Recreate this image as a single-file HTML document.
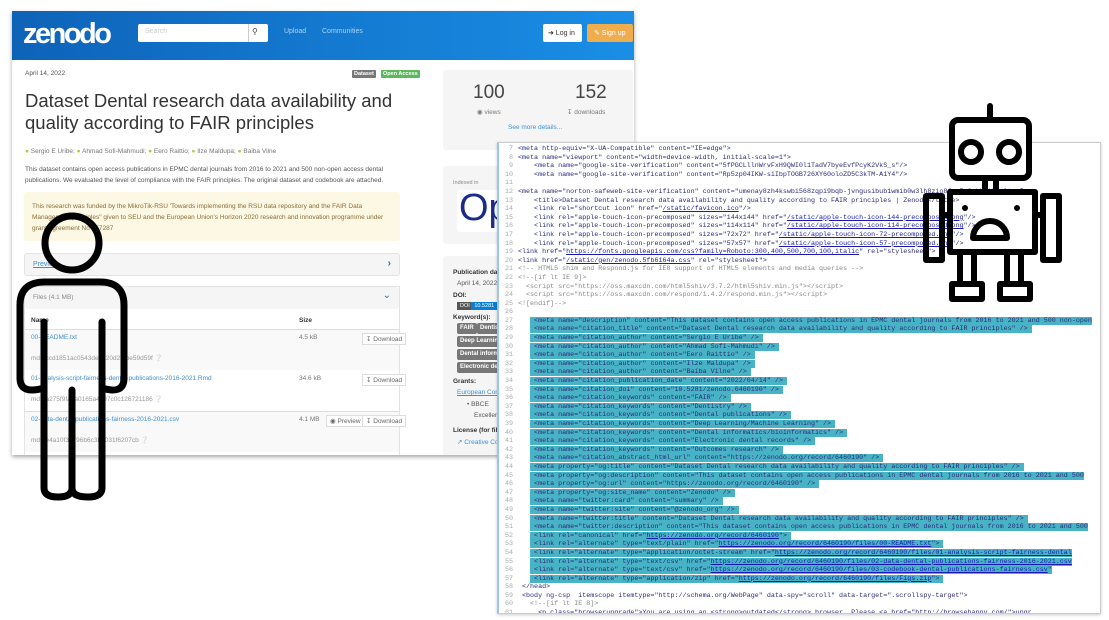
<!DOCTYPE html>
<html><head><meta charset="utf-8">
<style>
*{margin:0;padding:0;box-sizing:border-box}
body{width:1109px;height:620px;background:#fff;position:relative;overflow:hidden;font-family:"Liberation Sans",sans-serif;color:#333}
.a{position:absolute;white-space:nowrap}
#page{left:12px;top:11px;width:622px;height:444px;background:#fff;box-shadow:0 2px 4px rgba(0,0,0,.35);overflow:hidden}
#hdr{left:0;top:0;width:622px;height:49px;background:linear-gradient(90deg,#0d63b8,#1a8ee6)}
.sm{font-size:6.5px;color:#555}
.gbox{background:#f5f5f5;border-radius:3px}
.lnk{color:#3d8fd6}
.kw{position:absolute;background:#777;color:#fff;font-size:6px;line-height:7px;font-weight:bold;padding:2px 3px;border-radius:2px;white-space:nowrap}
#code{left:497px;top:142px;width:604px;height:472px;background:#fff;border:1px solid #ccc;border-left:2px solid #9ec6e8;box-shadow:0 1px 3px rgba(0,0,0,.2);overflow:hidden;font-family:"Liberation Mono",monospace;font-size:6.7px;line-height:8.6px;color:#2b2b7a}
#nums{left:0;top:2px;width:14px;text-align:right;color:#aaa;white-space:pre}
#src{left:19px;top:2px;white-space:pre}
.h{background:#49b3c6}
.u{text-decoration:underline;color:#1a1ab0}
.c{color:#888}
.wrap{white-space:normal}
</style></head><body>
<div id="page" class="a">
 <div id="hdr" class="a">
  <div class="a" style="left:11px;top:6px;color:#fff;font-size:29px;font-weight:bold;letter-spacing:-2.5px;line-height:34px">zenodo</div>
  <div class="a" style="left:126px;top:13px;width:130px;height:18px;background:#fff;border-radius:2px"><span class="a" style="left:7px;top:4px;font-size:7px;color:#ccc">Search</span><div class="a" style="left:110px;top:0;width:1px;height:18px;background:#ccc"></div><span class="a" style="left:114px;top:3px;font-size:8px;color:#444">&#9906;</span></div>
  <div class="a" style="left:272px;top:17px;font-size:7px;color:#a9d3f7">Upload</div>
  <div class="a" style="left:310px;top:17px;font-size:7px;color:#a9d3f7">Communities</div>
  <div class="a" style="left:531px;top:13px;width:39px;height:18px;background:#fff;border-radius:2px;font-size:7px;color:#333;padding:5px 0 0 5px">&#10140; Log in</div>
  <div class="a" style="left:575px;top:13px;width:46px;height:18px;background:#f0ad4e;border-radius:2px;font-size:7px;color:#fff;padding:5px 0 0 7px">&#9998; Sign up</div>
 </div>
 <div class="a sm" style="left:13px;top:59px">April 14, 2022</div>
 <div class="a" style="left:340px;top:59px;background:#777;color:#fff;font-size:5.5px;font-weight:bold;padding:1px 2px;border-radius:1px">Dataset</div>
 <div class="a" style="left:369px;top:59px;background:#5cb85c;color:#fff;font-size:5.5px;font-weight:bold;padding:1px 2px;border-radius:1px">Open Access</div>
 <div class="a wrap" style="left:13px;top:79px;width:390px;font-size:18.5px;line-height:22px;color:#333">Dataset Dental research data availability and quality according to FAIR principles</div>
 <div class="a sm" style="left:13px;top:137px;color:#777"><span style="color:#a6ce39">&#9679;</span> Sergio E Uribe; <span style="color:#a6ce39">&#9679;</span> Ahmad Sofi-Mahmudi; <span style="color:#a6ce39">&#9679;</span> Eero Raittio; <span style="color:#a6ce39">&#9679;</span> Ilze Maldupa; <span style="color:#a6ce39">&#9679;</span> Baiba Vilne</div>
 <div class="a sm wrap" style="left:13px;top:153px;width:390px;line-height:11px">This dataset contains open access publications in EPMC dental journals from 2016 to 2021 and 500 non-open access dental publications. We evaluated the level of compliance with the FAIR principles. The original dataset and codebook are attached.</div>
 <div class="a wrap" style="left:12px;top:181px;width:376px;height:49px;background:#fcf8e3;border-radius:3px;font-size:6.5px;color:#8a6d3b;padding:9px 8px;line-height:11px">This research was funded by the MikroTik-RSU 'Towards implementing the RSU data repository and the FAIR Data Management principles" given to SEU and the European Union's Horizon 2020 research and innovation programme under grant agreement No 857287</div>
 <div class="a gbox" style="left:12px;top:242px;width:376px;height:23px;border:1px solid #e3e3e3"><span class="a lnk" style="left:8px;top:7px;font-size:7px;text-decoration:underline">Preview</span><span class="a" style="right:8px;top:4px;font-size:10px;color:#2a6fb0;font-weight:bold">&#8250;</span></div>
 <div class="a" style="left:12px;top:275px;width:376px;height:175px;border:1px solid #e3e3e3">
  <div class="a gbox" style="left:0;top:0;width:374px;height:22px"><span class="a sm" style="left:8px;top:7px;color:#888">Files (4.1 MB)</span><span class="a" style="right:8px;top:3px;font-size:10px;color:#2a6fb0">&#8964;</span></div>
  <div class="a" style="left:6px;top:30px;font-size:6.5px;font-weight:bold">Name</div>
  <div class="a" style="left:274px;top:30px;font-size:6.5px;font-weight:bold">Size</div>
  <div class="a" style="left:0;top:42px;width:374px;height:41px;background:#f9f9f9;border-top:1px solid #ddd"></div>
  <div class="a" style="left:0;top:124px;width:374px;height:41px;background:#f9f9f9;border-top:1px solid #ddd"></div>
  <div class="a sm lnk" style="left:6px;top:47px">00-README.txt</div>
  <div class="a sm" style="left:6px;top:67px;color:#999">md5:ccd1851ac0543de8d20d2f6be59d59f &#10068;</div>
  <div class="a sm" style="left:274px;top:47px;color:#777">4.5 kB</div>
  <div class="a sm" style="left:337px;top:46px;border:1px solid #ddd;background:#fff;padding:1px 3px;color:#666">&#8615; Download</div>
  <div class="a sm lnk" style="left:6px;top:88px">01-analysis-script-fairness-dental-publications-2016-2021.Rmd</div>
  <div class="a sm" style="left:6px;top:108px;color:#999">md5:a275f9fa8a0165a4497c0c126721186 &#10068;</div>
  <div class="a sm" style="left:274px;top:88px;color:#777">34.6 kB</div>
  <div class="a sm" style="left:337px;top:87px;border:1px solid #ddd;background:#fff;padding:1px 3px;color:#666">&#8615; Download</div>
  <div class="a sm lnk" style="left:6px;top:129px">02-data-dental-publications-fairness-2016-2021.csv</div>
  <div class="a sm" style="left:6px;top:149px;color:#999">md5:e4a10f34796b6c3b1031f6207cb &#10068;</div>
  <div class="a sm" style="left:274px;top:129px;color:#777">4.1 MB</div>
  <div class="a sm" style="left:301px;top:128px;border:1px solid #ddd;background:#fff;padding:1px 3px;color:#666">&#9673; Preview</div>
  <div class="a sm" style="left:337px;top:128px;border:1px solid #ddd;background:#fff;padding:1px 3px;color:#666">&#8615; Download</div>
 </div>
 <div class="a gbox" style="left:431px;top:59px;width:190px;height:80px">
  <div class="a" style="left:30px;top:12px;font-size:19px;color:#444">100</div>
  <div class="a sm" style="left:34px;top:38px;color:#777">&#9673; views</div>
  <div class="a" style="left:132px;top:12px;font-size:19px;color:#444">152</div>
  <div class="a sm" style="left:124px;top:38px;color:#777">&#8615; downloads</div>
  <div class="a sm lnk" style="left:65px;top:54px">See more details...</div>
 </div>
 <div class="a gbox" style="left:431px;top:155px;width:190px;height:78px">
  <div class="a" style="left:10px;top:14px;font-size:5.5px;color:#888">Indexed in</div>
  <div class="a" style="left:14px;top:24px;width:60px;height:42px;background:#fff;border-radius:3px;overflow:hidden"><span class="a" style="left:2px;top:-3px;font-size:38px;color:#1c2a8a">Op</span></div>
 </div>
 <div class="a gbox" style="left:431px;top:245px;width:190px;height:205px;font-size:6.5px">
  <div class="a" style="left:10px;top:13px;font-weight:bold">Publication date:</div>
  <div class="a" style="left:14px;top:24px;color:#555">April 14, 2022</div>
  <div class="a" style="left:10px;top:36px;font-weight:bold">DOI:</div>
  <div class="a" style="left:14px;top:46px;background:#555;color:#fff;font-size:5.5px;padding:1px 3px">DOI <span style="background:#0b7fd1;padding:1px 3px">10.5281</span></div>
  <div class="a" style="left:10px;top:58px;font-weight:bold">Keyword(s):</div>
  <span class="kw" style="left:14px;top:67px">FAIR</span><span class="kw" style="left:34px;top:67px">Dentistry</span>
  <span class="kw" style="left:14px;top:80px">Deep Learning</span>
  <span class="kw" style="left:14px;top:93px">Dental informatics</span>
  <span class="kw" style="left:14px;top:106px">Electronic dental</span>
  <div class="a" style="left:10px;top:122px;font-weight:bold">Grants:</div>
  <div class="a lnk" style="left:14px;top:133px;text-decoration:underline">European Commission</div>
  <div class="a" style="left:24px;top:145px;color:#555">&#8226; BBCE</div>
  <div class="a" style="left:31px;top:156px;color:#555">Excellence</div>
  <div class="a" style="left:10px;top:171px;font-weight:bold">License (for files):</div>
  <div class="a lnk" style="left:14px;top:182px">&#8599; Creative Commons</div>
 </div>
</div>

<div id="code" class="a">
<div id="nums" class="a">7
8
9
10
11
12
13
14
15
16
17
18
19
20
21
22
23
24
25
26
27
28
29
30
31
32
33
34
35
36
37
38
39
40
41
42
43
44
45
46
47
48
49
50
51
52
53
54
55
56
57
58
59
60
61</div>
<div id="src" class="a">&lt;meta http-equiv="X-UA-Compatible" content="IE=edge"&gt;
&lt;meta name="viewport" content="width=device-width, initial-scale=1"&gt;
    &lt;meta name="google-site-verification" content="5fPGCLllnWrvFxH9QWI0l1TadV7byeEvfPcyK2VkS_s"/&gt;
    &lt;meta name="google-site-verification" content="Rp5zp04IKW-siIbpTOGB726XY60oloZD5C3kTM-A1Y4"/&gt;

&lt;meta name="norton-safeweb-site-verification" content="umenay8zh4kswbi568zqpi9bqb-jvngusibub1wmib0w3lh8zio8fmm7e0abb71kzgltqp5
    &lt;title&gt;Dataset Dental research data availability and quality according to FAIR principles | Zenodo&lt;/title&gt;
    &lt;link rel="shortcut icon" href="<span class="u">/static/favicon.ico</span>"/&gt;
    &lt;link rel="apple-touch-icon-precomposed" sizes="144x144" href="<span class="u">/static/apple-touch-icon-144-precomposed.png</span>"/&gt;
    &lt;link rel="apple-touch-icon-precomposed" sizes="114x114" href="<span class="u">/static/apple-touch-icon-114-precomposed.png</span>"/&gt;
    &lt;link rel="apple-touch-icon-precomposed" sizes="72x72" href="<span class="u">/static/apple-touch-icon-72-precomposed.png</span>"/&gt;
    &lt;link rel="apple-touch-icon-precomposed" sizes="57x57" href="<span class="u">/static/apple-touch-icon-57-precomposed.png</span>"/&gt;
&lt;link href="<span class="u">https://fonts.googleapis.com/css?family=Roboto:300,400,500,700,100,italic</span>" rel="stylesheet"&gt;
&lt;link href="<span class="u">/static/gen/zenodo.5fb6164a.css</span>" rel="stylesheet"&gt;
<span class="c">&lt;!-- HTML5 shim and Respond.js for IE8 support of HTML5 elements and media queries --&gt;</span>
<span class="c">&lt;!--[if lt IE 9]&gt;</span>
<span class="c">  &lt;script src="https://oss.maxcdn.com/html5shiv/3.7.2/html5shiv.min.js"&gt;&lt;/script&gt;</span>
<span class="c">  &lt;script src="https://oss.maxcdn.com/respond/1.4.2/respond.min.js"&gt;&lt;/script&gt;</span>
<span class="c">&lt;![endif]--&gt;</span>

   <span class="h"> &lt;meta name="description" content="This dataset contains open access publications in EPMC dental journals from 2016 to 2021 and 500 non-open</span>
   <span class="h"> &lt;meta name="citation_title" content="Dataset Dental research data availability and quality according to FAIR principles" /&gt; </span>
   <span class="h"> &lt;meta name="citation_author" content="Sergio E Uribe" /&gt; </span>
   <span class="h"> &lt;meta name="citation_author" content="Ahmad Sofi-Mahmudi" /&gt; </span>
   <span class="h"> &lt;meta name="citation_author" content="Eero Raittio" /&gt; </span>
   <span class="h"> &lt;meta name="citation_author" content="Ilze Maldupa" /&gt; </span>
   <span class="h"> &lt;meta name="citation_author" content="Baiba Vilne" /&gt; </span>
   <span class="h"> &lt;meta name="citation_publication_date" content="2022/04/14" /&gt; </span>
   <span class="h"> &lt;meta name="citation_doi" content="10.5281/zenodo.6460190" /&gt; </span>
   <span class="h"> &lt;meta name="citation_keywords" content="FAIR" /&gt; </span>
   <span class="h"> &lt;meta name="citation_keywords" content="Dentistry" /&gt; </span>
   <span class="h"> &lt;meta name="citation_keywords" content="Dental publications" /&gt; </span>
   <span class="h"> &lt;meta name="citation_keywords" content="Deep Learning/Machine Learning" /&gt; </span>
   <span class="h"> &lt;meta name="citation_keywords" content="Dental informatics/bioinformatics" /&gt; </span>
   <span class="h"> &lt;meta name="citation_keywords" content="Electronic dental records" /&gt; </span>
   <span class="h"> &lt;meta name="citation_keywords" content="Outcomes research" /&gt; </span>
   <span class="h"> &lt;meta name="citation_abstract_html_url" content="https://zenodo.org/record/6460190" /&gt; </span>
   <span class="h"> &lt;meta property="og:title" content="Dataset Dental research data availability and quality according to FAIR principles" /&gt; </span>
   <span class="h"> &lt;meta property="og:description" content="This dataset contains open access publications in EPMC dental journals from 2016 to 2021 and 500</span>
   <span class="h"> &lt;meta property="og:url" content="https://zenodo.org/record/6460190" /&gt; </span>
   <span class="h"> &lt;meta property="og:site_name" content="Zenodo" /&gt; </span>
   <span class="h"> &lt;meta name="twitter:card" content="summary" /&gt; </span>
   <span class="h"> &lt;meta name="twitter:site" content="@zenodo_org" /&gt; </span>
   <span class="h"> &lt;meta name="twitter:title" content="Dataset Dental research data availability and quality according to FAIR principles" /&gt; </span>
   <span class="h"> &lt;meta name="twitter:description" content="This dataset contains open access publications in EPMC dental journals from 2016 to 2021 and 500</span>
   <span class="h"> &lt;link rel="canonical" href="<span class="u">https://zenodo.org/record/6460190</span>"&gt; </span>
   <span class="h"> &lt;link rel="alternate" type="text/plain" href="<span class="u">https://zenodo.org/record/6460190/files/00-README.txt</span>"&gt; </span>
   <span class="h"> &lt;link rel="alternate" type="application/octet-stream" href="<span class="u">https://zenodo.org/record/6460190/files/01-analysis-script-fairness-dental</span></span>
   <span class="h"> &lt;link rel="alternate" type="text/csv" href="<span class="u">https://zenodo.org/record/6460190/files/02-data-dental-publications-fairness-2016-2021.csv</span></span>
   <span class="h"> &lt;link rel="alternate" type="text/csv" href="<span class="u">https://zenodo.org/record/6460190/files/03-codebook-dental-publications-fairness.csv</span>"</span>
   <span class="h"> &lt;link rel="alternate" type="application/zip" href="<span class="u">https://zenodo.org/record/6460190/files/Figs.zip</span>"&gt; </span>
 &lt;/head&gt;
 &lt;body ng-csp  itemscope itemtype="http://schema.org/WebPage" data-spy="scroll" data-target=".scrollspy-target"&gt;
   <span class="c">&lt;!--[if lt IE 8]&gt;</span>
     &lt;p class="browserupgrade"&gt;You are using an &lt;strong&gt;outdated&lt;/strong&gt; browser. Please &lt;a href="http://browsehappy.com/"&gt;upgr</div>
</div>

<svg class="a" style="left:0;top:0" width="1109" height="620" viewBox="0 0 1109 620">
 <g fill="none" stroke="#000" stroke-width="7" stroke-linejoin="round" stroke-linecap="round">
  <circle cx="72" cy="243" r="27"/>
  <path d="M44,322 V488 Q44,497 58,497 Q72,497 72,488 V390 M72,390 V488 Q72,497 88,497 Q102,497 102,488 V322"/>
  <path d="M44,388 Q20,395 20,378 V305 Q20,282 45,282 H100 Q124,282 124,305 V378 Q124,395 102,388"/>
 </g>
 <g stroke="#000" stroke-width="6" stroke-linejoin="round">
  <line x1="990" y1="106" x2="990" y2="120" stroke-linecap="round"/>
  <rect x="952" y="120" width="77" height="58" rx="6" fill="rgba(255,255,255,.85)"/>
  <circle cx="971" cy="152" r="10" fill="none"/>
  <circle cx="1009" cy="152" r="10" fill="none"/>
  <rect x="985" y="178" width="11" height="14" fill="none"/>
  <rect x="950" y="192" width="85" height="60" fill="none"/>
  <rect x="926" y="196" width="16" height="64" fill="none"/>
  <rect x="1043" y="196" width="16" height="64" fill="none"/>
  <line x1="942" y1="215" x2="950" y2="215"/>
  <line x1="1035" y1="215" x2="1043" y2="215"/>
  <path d="M973,238 A17,17 0 0 1 1007,238 Z" fill="none"/>
  <rect x="960" y="252" width="14" height="32" fill="none"/>
  <rect x="1007" y="252" width="14" height="32" fill="none"/>
  <rect x="952" y="284" width="30" height="15" fill="none"/>
  <rect x="1000" y="284" width="30" height="15" fill="none"/>
 </g>
 <circle cx="965" cy="208" r="3"/>
 <circle cx="1017" cy="208" r="3"/>
</svg>
</body></html>
